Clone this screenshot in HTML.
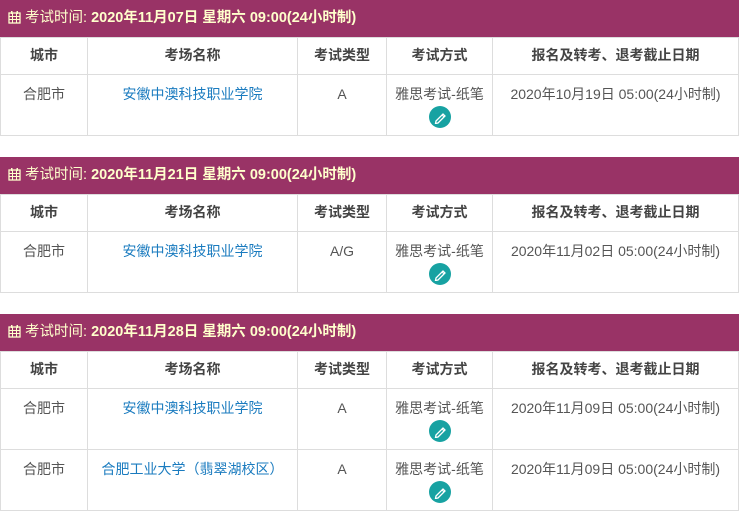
<!DOCTYPE html>
<html><head><meta charset="utf-8"><style>
*{margin:0;padding:0;box-sizing:border-box}
body{width:739px;height:509px;background:#fff;position:relative;overflow:hidden;font-family:"Liberation Sans","Noto Sans CJK SC",sans-serif;font-size:14px;color:#555}
.bar{position:absolute;left:0;width:739px;height:37px;background:#993366;color:#ffffcc;line-height:37px;padding-left:8px;font-size:14.5px}
.bar b{font-weight:bold}
.bar svg{vertical-align:-2px;margin-right:4px}
table{position:absolute;left:0;width:739px;border-collapse:collapse;table-layout:fixed}
td,th{border:1px solid #ddd;text-align:center;vertical-align:top}
th{height:37px;line-height:35px;font-weight:bold;color:#444}
td{height:61px;padding-top:10px;line-height:18px}
a{color:#1a7bbf;text-decoration:none}
.ic{display:block;margin:3px auto 0;width:22px;height:22px;border-radius:50%;background:#17a2a2;position:relative}
.ic svg{position:absolute;left:5px;top:5px}
</style></head><body>
<svg width="0" height="0" style="position:absolute"><defs>
<g id="cal"><rect x="1" y="3" width="11" height="10" fill="none" stroke="#ffffcc" stroke-width="1.3"/><rect x="3" y="1" width="1.5" height="3" fill="#ffffcc"/><rect x="8.5" y="1" width="1.5" height="3" fill="#ffffcc"/><path d="M1 6.5H12M1 9.5H12M4.5 3V13M8.5 3V13" stroke="#ffffcc" stroke-width="1"/></g>
<g id="pen"><path d="M2 10 L9 3 L11 5 L4 12 L1.5 12.5 Z" fill="none" stroke="#fff" stroke-width="1.3"/><path d="M8 4 L10 6" stroke="#fff" stroke-width="1"/></g>
</defs></svg>

<div class="bar" style="top:0"><svg width="13" height="14"><use href="#cal"/></svg>考试时间: <b>2020年11月07日 星期六 09:00(24小时制)</b></div>
<table style="top:37px">
<colgroup><col style="width:87px"><col style="width:210px"><col style="width:89px"><col style="width:106px"><col></colgroup>
<tr><th>城市</th><th>考场名称</th><th>考试类型</th><th>考试方式</th><th>报名及转考、退考截止日期</th></tr>
<tr><td>合肥市</td><td><a>安徽中澳科技职业学院</a></td><td>A</td><td>雅思考试-纸笔<span class="ic"><svg width="12" height="13"><use href="#pen"/></svg></span></td><td>2020年10月19日 05:00(24小时制)</td></tr>
</table>

<div class="bar" style="top:157px"><svg width="13" height="14"><use href="#cal"/></svg>考试时间: <b>2020年11月21日 星期六 09:00(24小时制)</b></div>
<table style="top:194px">
<colgroup><col style="width:87px"><col style="width:210px"><col style="width:89px"><col style="width:106px"><col></colgroup>
<tr><th>城市</th><th>考场名称</th><th>考试类型</th><th>考试方式</th><th>报名及转考、退考截止日期</th></tr>
<tr><td>合肥市</td><td><a>安徽中澳科技职业学院</a></td><td>A/G</td><td>雅思考试-纸笔<span class="ic"><svg width="12" height="13"><use href="#pen"/></svg></span></td><td>2020年11月02日 05:00(24小时制)</td></tr>
</table>

<div class="bar" style="top:314px"><svg width="13" height="14"><use href="#cal"/></svg>考试时间: <b>2020年11月28日 星期六 09:00(24小时制)</b></div>
<table style="top:351px">
<colgroup><col style="width:87px"><col style="width:210px"><col style="width:89px"><col style="width:106px"><col></colgroup>
<tr><th>城市</th><th>考场名称</th><th>考试类型</th><th>考试方式</th><th>报名及转考、退考截止日期</th></tr>
<tr><td>合肥市</td><td><a>安徽中澳科技职业学院</a></td><td>A</td><td>雅思考试-纸笔<span class="ic"><svg width="12" height="13"><use href="#pen"/></svg></span></td><td>2020年11月09日 05:00(24小时制)</td></tr>
<tr><td>合肥市</td><td><a>合肥工业大学（翡翠湖校区）</a></td><td>A</td><td>雅思考试-纸笔<span class="ic"><svg width="12" height="13"><use href="#pen"/></svg></span></td><td>2020年11月09日 05:00(24小时制)</td></tr>
</table>
</body></html>
